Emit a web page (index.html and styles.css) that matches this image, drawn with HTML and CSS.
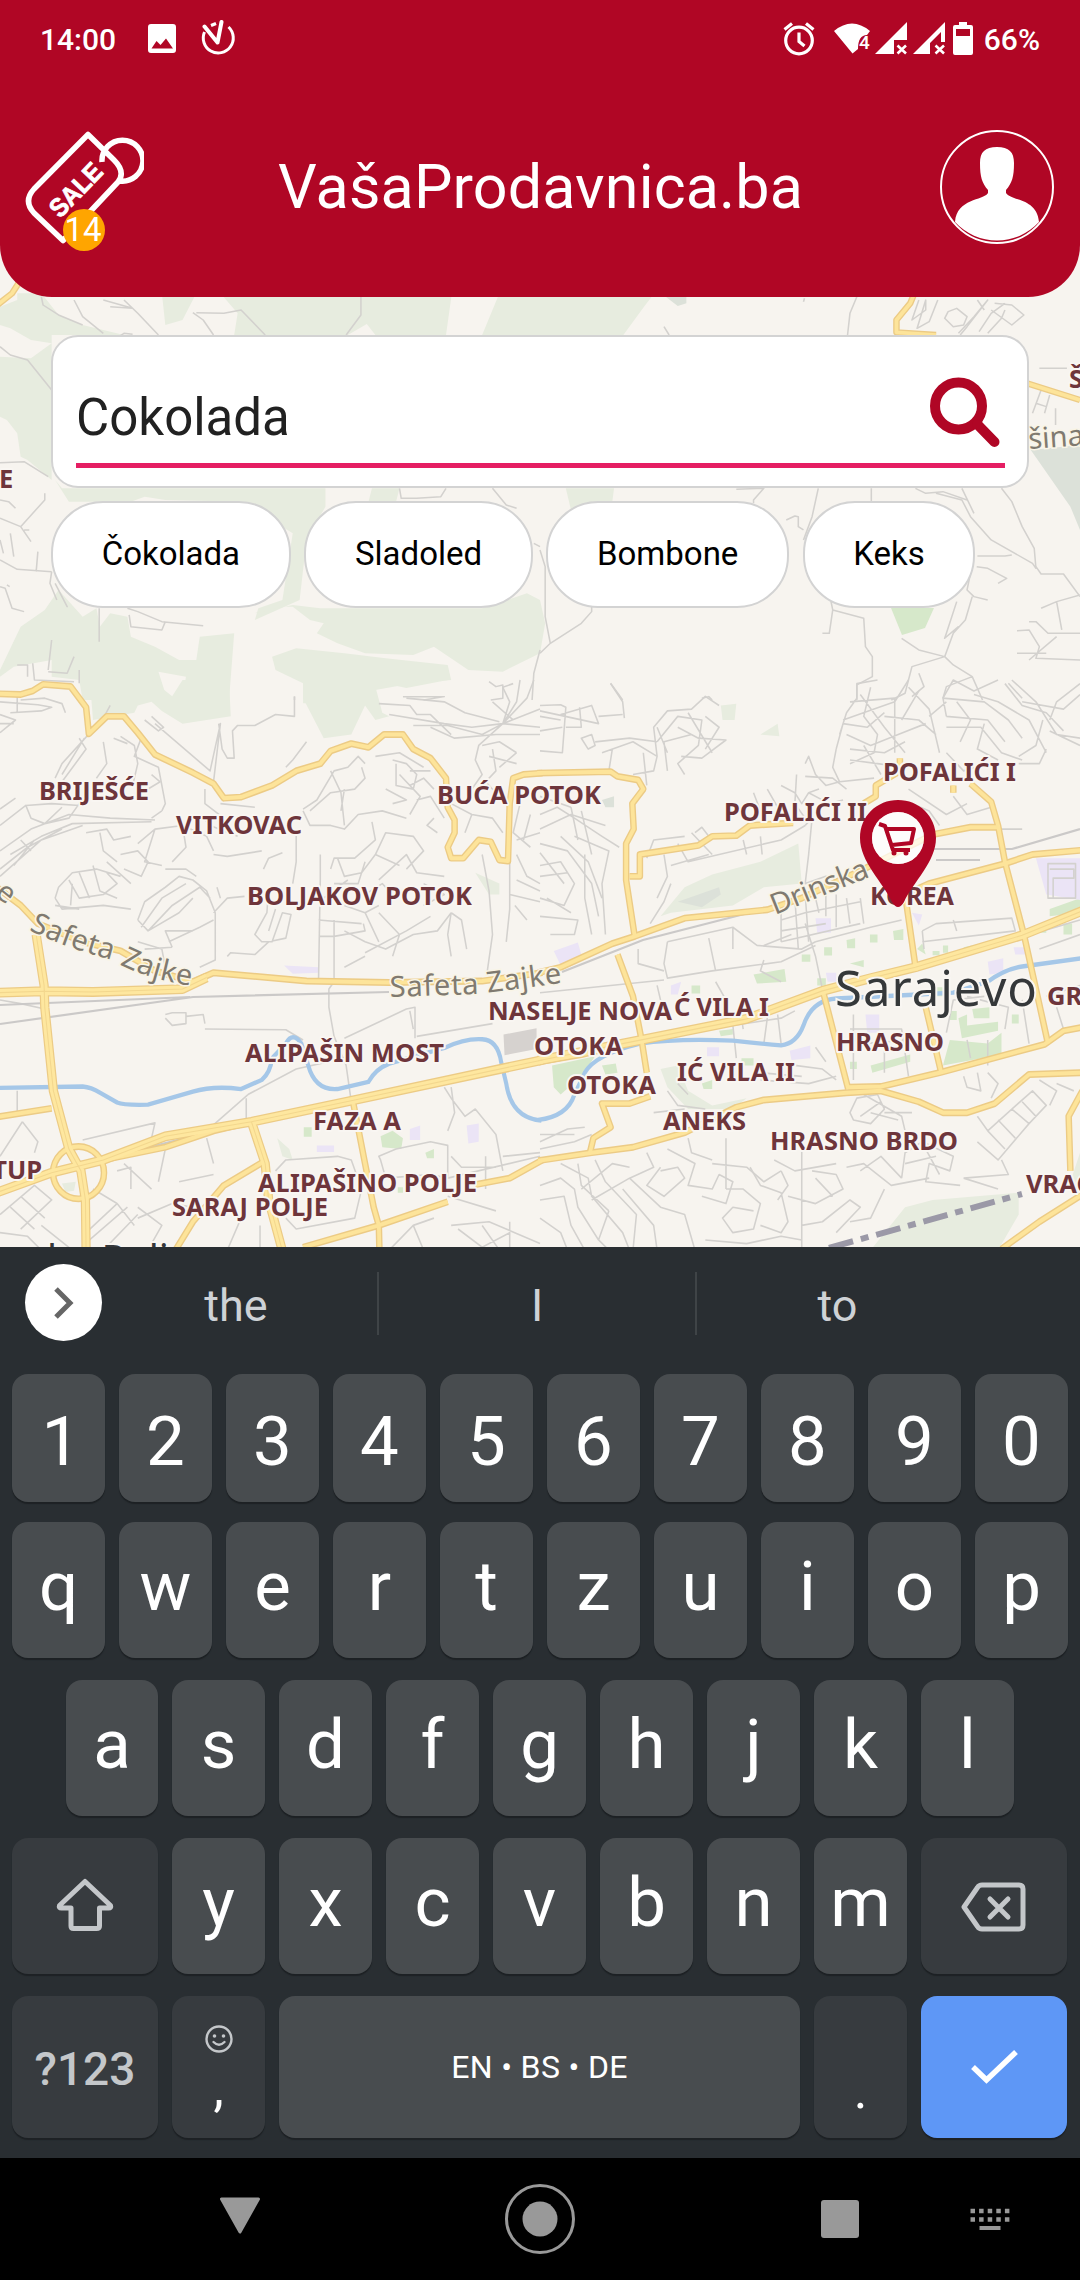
FILE: index.html
```html
<!DOCTYPE html>
<html lang="bs">
<head>
<meta charset="utf-8">
<title>VašaProdavnica.ba</title>
<link rel="stylesheet" href="styles.css">
</head>
<body>
<div class="screen">
  <header class="header">
    <div class="statusbar">
      <div class="status-group status-left">
        <span class="status-text">14:00</span>
        <svg class="ic-image" width="30" height="36" viewBox="0 0 30 36"><path fill="#fff" fill-rule="evenodd" d="M4 4H26Q29 4 29 7V30Q29 33 26 33H4Q1 33 1 30V7Q1 4 4 4ZM4.500 28.500H26L19 18.500L13.500 25L9.500 21Z"/></svg>
        <svg class="ic-timer" width="36" height="36" viewBox="0 0 36 36" fill="none" stroke="#fff"><path stroke-width="3" d="M4.500 12A15 15 0 1 0 28.500 7"/><path stroke-width="4" stroke-linecap="round" stroke-linejoin="round" d="M4.500 6.500L17.500 22.500L21.500 2"/><path stroke-width="3.400" d="M11 5.500L16 3.500"/></svg>
      </div>
      <div class="status-group status-right">
        <svg class="ic-alarm" width="32" height="36" viewBox="0 0 32 36" fill="none" stroke="#fff" stroke-width="3.200"><circle cx="16" cy="20.500" r="13.300"/><path d="M16 12.500V21.500L21.500 26M1.500 9.500L9 3.500M30.500 9.500L23 3.500"/></svg>
        <svg class="ic-wifi" width="37" height="36" viewBox="0 0 37 36"><path fill="#fff" d="M0 11Q18 -4 36 11L33 15Q24 15 24 29L18.500 33.500Z"/><text x="25" y="29" class="wifi-num">4</text></svg>
        <svg class="ic-sig" width="32" height="36" viewBox="0 0 32 36"><path fill="#fff" d="M0 34L32 2V20H19V34Z"/><path stroke="#fff" stroke-width="2.600" d="M22.500 25.500L31 33.500M31 25.500L22.500 33.500"/></svg>
        <svg class="ic-sig2" width="32" height="36" viewBox="0 0 32 36"><path fill="#fff" fill-rule="evenodd" d="M0 34L32 2V22H28V12L17 23V34Z"/><path stroke="#fff" stroke-width="2.600" d="M22.500 25.500L31 33.500M31 25.500L22.500 33.500"/></svg>
        <svg class="ic-batt" width="20" height="36" viewBox="0 0 20 36"><path fill="#fff" fill-rule="evenodd" d="M6 2H14V5H18Q20 5 20 7V33Q20 35 18 35H2Q0 35 0 33V7Q0 5 2 5H6ZM3 9V16H17V9Z"/></svg>
        <span class="status-text">66%</span>
      </div>
    </div>
    <div class="appbar">
      <div class="sale">
        <svg width="120" height="120" viewBox="23 130 120 120">
          <g fill="none" stroke="#fff" stroke-width="5.500" stroke-linejoin="round"><path d="M101 162A20.500 20.500 0 1 1 119 181M87 134.500L113 160Q125 172 117 182L62 240.500L33 213Q22 201 33 189Z"/></g>
          <text class="sale-text" transform="translate(59 219) rotate(-46)" textLength="64" lengthAdjust="spacingAndGlyphs">SALE</text>
        </svg>
        <span class="badge">14</span>
      </div>
      <h1 class="title">VašaProdavnica.ba</h1>
      <svg class="avatar" width="116" height="116" viewBox="0 0 116 116"><circle cx="58" cy="58" r="56" fill="none" stroke="#fff" stroke-width="2"/><path fill="#fff" d="M58 18C70 18 75 23 75 34C75 48 73 54 67 61V64C72 72 98 69 100 93A57 57 0 0 1 16 93C18 69 44 72 49 64V61C43 54 41 48 41 34C41 23 46 18 58 18Z"/></svg>
    </div>
  </header>

  <main class="content">
    <svg class="map" width="1080" height="1010" viewBox="0 237 1080 1010">
      <defs>
        <!-- secondary roads, north-west to south-east -->
        <g id="roads">
          <g transform="translate(0 300) scale(.3444 .3333)"><path d="M-8 15L35 -20L60 -60"/></g>
          <g transform="translate(540 300) scale(.3444 .3333)"><path d="M1095 -40L1075 10L1035 60L1035 97L1150 105M1400 245L1568 300"/></g>
          <g transform="translate(0 680) scale(.3444 .3636)">
            <path d="M-5 38L60 40L95 30L125 12L205 18L250 75L258 148L310 100L360 100L400 145L450 205L560 255L620 285L650 325L700 322L790 290L860 250L930 230L960 195L1020 175L1070 185L1115 150L1170 150L1200 190L1250 215L1295 270L1300 350L1320 385L1320 420L1300 460L1310 490L1345 490L1390 440L1425 445L1450 495L1475 498L1480 340L1490 270L1520 260L1575 256"/>
            <path d="M-10 570L60 620L110 670L240 720L350 745L450 800L560 830L620 805L890 828L1130 832L1400 828L1575 805"/>
            <path d="M-10 1202L150 1178M300 1320L480 1285L620 1240L730 1215M765 1325L650 1390L560 1490L505 1575M1025 1160L1060 1330L1085 1450L1100 1500L1102 1580M880 1560L1100 1500L1300 1435M1380 1388L1480 1370L1575 1320"/>
            <ellipse cx="228" cy="1355" rx="74" ry="72"/>
          </g>
          <g transform="translate(540 680) scale(.3444 .3636)">
            <path d="M-8 256L205 252L225 265L285 275L300 300L268 340L272 410L250 450L250 550L275 705"/>
            <path d="M-5 805L60 790L210 725L275 705L420 655L660 632L760 600L940 520L1140 425L1250 405L1330 405"/>
            <path d="M1060 590L1130 560L1350 505L1430 480L1575 468M260 540L290 540L290 480L460 455L500 430L570 428L610 400L735 393"/>
            <path d="M940 340L975 320L975 290L1045 250L1045 215M1250 285L1310 335L1330 400L1350 500L1405 700L1440 850L1475 1000M1200 290V310"/>
            <path d="M-5 1050L120 1030L240 1003M145 1300L155 1260L205 1230L180 1165L260 1165L320 1145M225 755L270 870L295 990L310 1080M820 850L850 960L895 1125M1120 900L1165 1080M1060 590L1092 800"/>
            <path d="M-5 1322L150 1300L270 1285L420 1245L570 1175L650 1155L890 1135L990 1130L1100 1160L1170 1190L1240 1190L1320 1165L1420 1085L1575 1080M895 1120L990 1118L1160 1080L1465 1002L1520 965L1575 955M1340 1565L1450 1490L1575 1415M1575 1130L1535 1200L1540 1350"/>
          </g>
        </g>
        <!-- primary roads -->
        <g id="primary">
          <g transform="translate(0 680) scale(.3444 .3636)">
            <path d="M-5 860L125 856L270 858L530 850L600 818M105 700L128 840L130 900L155 1130L200 1290L235 1350L248 1430L250 1575M-5 1408L150 1355L300 1320L480 1255L730 1215L1030 1155L1575 1045M730 1215L770 1330L780 1430L820 1570"/>
          </g>
          <g transform="translate(540 680) scale(.3444 .3636)">
            <path d="M-5 1047L240 1000L600 932L820 855L960 820L1090 790L1400 702L1575 635"/>
          </g>
        </g>
      </defs>
      <rect x="0" y="237" width="1080" height="1010" fill="#f7f4ef"/>

      <!-- woods and parks -->
      <g class="wood">
        <g transform="translate(0 300) scale(.3444 .3333)">
          <path d="M0 20L50 0V-20H120L170 45L240 75L360 105L150 105L150 130L90 120L30 85L0 75Z"/>
          <path d="M0 170L90 175L150 130V540L80 480L60 470L50 400L20 360L0 350Z"/>
          <path d="M470 -20H570L530 60L480 75ZM640 -20H1312L1295 105H1090L1065 72L1010 105H680L690 40ZM1450 -20H1900L1870 20L1810 105H1400Z"/>
          <path d="M160 540L180 565H945V620L890 720L870 900L740 960L750 925L820 900L850 700L700 605L480 600L420 590L380 605H200ZM1080 565H1160L1150 605H1070Z"/>
          <path d="M740 940L780 920H850L900 960L940 970L920 1000L980 1030L1060 1060L1200 1065L1260 1040L1360 1110L1460 1115L1568 1060L1583 970L1568 900L1530 880L1400 925H930L850 915Z"/>
          <path d="M790 1070L860 1045L1000 1060L1120 1075L1300 1095L1310 1140L1200 1150L1090 1170L1080 1210H880V1150L800 1110Z"/>
          <path d="M170 870L240 950L280 925L290 980L320 940L370 950L380 1010L450 1040L520 1080H570L580 1010L680 1000L665 1200H560L530 1190L540 1130L460 1115L480 1180L440 1200H240L230 1140L150 1130V1080L40 1100L0 1130V1110L60 980L130 930Z"/>
        </g>
        <g transform="translate(540 300) scale(.3444 .3333)"><path d="M75 565H215L210 605L150 610L90 630Z"/></g>
        <g transform="translate(0 680) scale(.3444 .3636)">
          <path d="M265 50V0H440L500 45L530 0H665L670 100L530 120L470 85L440 60L400 70L390 90L270 110ZM880 50V0H1085L1110 90L1130 100L1090 110L1060 70L1020 150L940 160ZM1095 5L1300 0L1180 22Z"/>
          <path d="M1380 530L1450 560V590H1420ZM180 1385L220 1380L215 1405L190 1408ZM805 1260L840 1290L850 1320L820 1310Z"/>
        </g>
        <g transform="translate(540 680) scale(.3444 .3636)">
          <path d="M350 650L420 570L500 535L640 500L750 450L760 560L650 570L560 620L380 640ZM525 70L570 65L565 110H530ZM640 150L690 120L695 155ZM960 1568L1060 1450L1140 1430L1390 1410V1470L1330 1568ZM1568 1300L1540 1380H1568ZM350 1070L400 1060L430 1130L500 1170L600 1150L560 1180H430L370 1120Z"/>
        </g>
      </g>
      <g class="shade">
        <g transform="translate(540 300) scale(.3444 .3333)"><path d="M1425 450L1568 435V690L1540 620ZM365 -10H425V10L400 18Z"/></g>
        <g transform="translate(540 680) scale(.3444 .3636)"><path d="M400 610L520 570L525 590L470 625ZM180 330L215 320V350H190Z"/></g>
      </g>
      <g class="park">
        <path d="M891 608H934L925 628L902 635Z"/>
        <g transform="translate(0 680) scale(.3444 .3636)"><path d="M882 1230H905V1256H882ZM1105 1255L1140 1240L1170 1260L1165 1290L1110 1285ZM1235 1300L1260 1290V1315H1240ZM1155 1395H1170V1410H1155Z"/></g>
        <g transform="translate(540 680) scale(.3444 .3636)"><path d="M35 1060L160 1035L120 1090L60 1140L40 1120ZM180 1060L220 1055L225 1080L190 1085ZM1170 1060L1190 990L1300 1000L1340 970V1030ZM1215 930L1240 920V950L1330 940V965L1225 985ZM1255 905L1305 900V930H1260ZM1480 630L1568 600V640L1480 650ZM825 735H848V758H825ZM890 715L915 710V738H892ZM958 700H980V722H958ZM1025 690L1055 685V715H1028ZM760 755H785V775H760ZM1095 740L1110 725L1120 755ZM1140 745H1160V757H1140ZM1170 730H1185V750H1170ZM1230 735L1280 725V745H1235ZM440 840H465V862H440ZM620 810L710 795L715 830L630 835ZM900 780L940 770V790ZM805 820H830V840H805ZM905 970H925V995H905ZM900 1050H920V1070H900ZM960 1060L1075 1030V1050L965 1080ZM1190 910H1210V935H1190ZM1370 920H1390V945H1370ZM1450 670H1470V695H1450ZM1520 670H1545V700H1520ZM470 1110L500 1100V1125H475ZM520 965L560 960V975L525 980ZM1150 845H1180V870H1150ZM585 1040H620V1060H585Z"/></g>
      </g>
      <g class="civic">
        <g transform="translate(0 680) scale(.3444 .3636)"><path d="M825 785L925 790V805L850 808ZM1190 1235L1220 1225V1265H1190ZM1355 1225L1390 1220V1270L1360 1275ZM920 1280H970V1298H920Z"/></g>
        <g transform="translate(540 680) scale(.3444 .3636)"><path d="M40 745L110 722L120 755L60 785ZM800 655H845V695H805ZM1440 490H1568V605L1470 590ZM1080 640L1110 645L1100 675ZM1300 775L1345 765V805L1305 810ZM725 1020L785 1005V1040L730 1045ZM945 920H985V970H950ZM380 840L410 830L400 865H380ZM485 1010H520V1035H485ZM1375 735H1410V755H1380ZM830 805H860V830H835Z"/></g>
      </g>
      <g class="building"><g transform="translate(0 680) scale(.3444 .3636)"><path d="M1462 975L1558 958V1015L1465 1032Z"/></g></g>

      <!-- local streets -->
      <g class="street">
        <g transform="translate(0 300) scale(.3444 .3333)">
          <path d="M120 -10L125 15L170 45L240 75M215 0L240 50L300 100M360 0L400 40L460 105M300 0L385 25L320 20M345 110L360 100L385 103M560 38L590 60L620 105M570 38L650 40L700 30L770 105M1048 -10V45L1005 105M0 140L30 165L80 180L150 270M0 488L70 485L140 530M0 600L25 605L45 625M130 580V600L60 680L0 655M0 780L50 808L150 815M60 680L90 725M70 690L85 690M30 700L40 770M0 720L10 760M110 755L105 815M0 860L15 865L35 925L70 935M20 855L28 860M150 815L145 850L165 900M160 850L195 920L175 880M288 925V1025M370 925L400 935L470 965L590 977M375 945L380 980L470 990L480 965M150 1020L140 1110M50 1095H80V1130M95 1090L100 1140L215 1145M215 1070L195 1120L140 1115M230 1110V1150M1160 565L1165 595H1210L1280 590L1295 565M1430 565L1470 615L1500 625M1550 730L1568 740M1568 1050L1550 1120L1545 1200M1420 1145L1440 1160L1460 1155V1195L1425 1200M1170 1190L1290 1190L1230 1200M855 1190V1200"/>
        </g>
        <g transform="translate(540 300) scale(.3444 .3333)">
          <path d="M768 -5L765 5M920 -10L900 40L893 105M360 80L375 105M1100 0L1080 60L1120 30V0L1095 85L1130 65L1155 0M1185 35L1210 25L1240 50L1230 75L1200 80L1175 55ZM1215 100L1260 50L1300 0L1240 80L1220 105M1275 95L1310 40L1350 10M1310 30L1370 75L1405 45L1370 15L1320 10M1270 0L1290 30M1300 100L1340 55L1350 30M1450 205H1530M1455 270L1430 340M1480 285L1465 340M1497 325V375M1440 310L1470 320M570 568L650 565L620 600V610M808 565L790 650L765 720M715 660L740 648L750 650V680L765 690M962 565V605M1090 565L1120 580L1170 575L1240 600M1150 580L1225 600L1250 650L1310 720L1430 790L1440 805L1435 745L1400 680L1370 605L1340 565M1225 565L1260 640M1270 768H1350L1370 765M1268 800L1300 805L1355 835L1330 850M1250 820L1240 870L1260 890L1300 900M1210 905L1180 1000L1175 1015L1215 980M1255 890L1235 960L1200 1000L1175 1070M845 905L850 930L840 1000L820 1000M850 930L940 955L945 1040L965 1070V1130L920 1155V1200M1050 1015L1100 1050L1175 1070L1200 1095L1255 1130L1285 1200M1175 1070L1080 1100L1060 1180L1020 1200M1100 1120L1115 1160L1080 1190M1255 1130L1180 1160L1170 1195M1385 992L1420 990L1450 1040L1440 1075L1568 1080M1420 965H1440L1475 1000H1568M1455 925L1500 905L1568 885M1500 905L1515 990M1385 1060H1470M1420 1080L1500 1010M1440 800L1455 822H1520L1568 890M1360 1150L1400 1195M0 750L15 800V950L30 1030L0 1060M30 1030L120 970L150 935V920M205 1150L240 1200M470 1195L490 1190L500 1200"/>
        </g>
        <g transform="translate(0 680) scale(.3444 .3636)">
          <path d="M50 40V90M0 60L110 68L150 75L120 85L30 90M0 95L45 110L0 145M60 55L130 50L180 65L190 90M0 120H40M320 70L300 105L180 230L160 270M245 160L180 260M350 155L390 180L400 230L385 290M230 160L250 190L180 280M410 160L390 210L460 240L480 340L470 360M440 100L475 130L460 140L420 110M450 120L610 250L640 120L620 280M635 120L645 190L660 215H680L675 140L690 125L740 125L800 95L855 100V45M890 170L850 220L830 240M300 170L310 230L280 270M330 160L370 175"/>
          <path d="M0 355L45 325M0 400L75 345L90 380L130 395L180 350M75 345L150 340L230 345M0 470L90 410L200 370L320 380L450 385M30 480L120 430L210 395L440 390M0 520L80 460L180 410M40 510L100 440M90 470L60 440M0 540L120 440L240 400M130 395L200 380L230 340M250 420L310 410L330 440L380 430M290 420L300 470L340 500M440 260L465 280L430 300M470 360L440 380"/>
          <path d="M160 600L170 570L210 530L280 520L350 540M160 600L180 630L300 620L380 630M200 550L230 600L300 590L340 560L310 530M230 530L260 600M270 510L290 580L340 600M350 480L400 470L430 500L410 540L360 520M310 500L380 560M400 660L420 610L480 570L520 540L560 550L600 580L625 640V770L580 790M400 660L430 690L520 640L560 600M410 680L470 600L540 560M430 690L500 620L580 570L610 600M480 520L540 520L570 540M490 720L580 680L620 660M400 720L470 740L480 790M420 740L500 735M500 735L480 690L560 690M400 450L450 410L530 400L600 430L620 470M450 410L420 500L470 510M530 400L540 460L500 500M580 370L610 400L690 430M620 480L660 485L760 470M595 300V340L650 380M640 340L740 350M620 640L660 600L710 595M630 570L640 600M660 760L670 750L740 755L780 720L830 710L845 645L820 640L790 720L760 720L740 700L775 640L780 570M765 520L780 490L820 475M860 420V500L850 560M800 630L780 690M160 620L230 630M210 560L205 620"/>
          <path d="M880 355L920 330L970 250L1010 240L1040 210L1060 230M900 360L960 310L1030 300L1060 270L1050 240M880 360L900 400H960L1000 410L1040 370L1110 360L1180 380M960 250L990 310L1000 400M1000 300L990 360M1140 220L1180 230L1210 260L1200 300L1150 290L1150 230M1090 210L1160 200L1230 240M1160 260L1220 320L1190 370M1190 290L1230 270L1260 300M1210 330L1250 320L1290 380M1260 380L1240 400L1270 420M1120 300L1180 330L1140 340"/>
          <path d="M930 480V550L925 820M960 520L970 490L1030 490L1090 440L1080 390M970 560L1040 560L1060 500M940 600L980 570L1010 550M980 490L1000 540L1050 530L1090 480L1160 510M1090 480L1120 420L1200 430L1230 470L1180 520M1100 550L1180 480L1210 530L1290 540M1060 590L1110 560L1150 600M1000 620L1060 640L1100 620M1230 560L1290 590L1230 620M925 660L1050 670M925 705H970L1060 690L1055 670M970 660V830L955 850V900L970 980L1005 1060L1020 1160M1000 690L1060 720L1120 740L1200 700L1270 690L1310 640M1060 640L1100 720M1100 640L1160 700L1140 760M1310 640L1340 660L1355 740M1310 640L1300 700L1310 760M1060 750L1180 690L1250 650M1000 790L1060 760M1400 480L1420 580L1430 700L1415 800M1480 500V630L1470 720M1495 620L1530 660M1500 440L1568 420M1500 480L1530 540L1568 560M1510 340L1490 420L1540 460M1540 370L1520 440M1480 590L1568 610M1500 550L1568 580"/>
          <path d="M1100 65L1190 70L1210 95H1250L1310 150M1130 95L1290 120L1370 130L1460 120L1568 80M1180 50L1290 60L1350 90L1450 115M1200 125L1300 125L1400 150L1460 120L1500 60L1510 0M1460 120L1480 60L1460 20L1490 10M1460 120L1530 50L1550 0M1460 120L1568 130M1460 120L1390 180L1380 220L1400 260L1370 300M1250 130L1320 160L1440 150L1568 150M1400 180L1450 170L1500 200M1430 60L1490 110M1420 210L1500 230M1430 190L1440 250L1410 280L1440 310M1250 250L1190 250M1370 370L1310 340M1350 420L1370 370L1430 380L1460 420M1500 200L1450 240"/>
          <path d="M480 920L500 915H540V945L500 950L480 930M540 925L590 920L595 945M595 960L830 962L880 990M720 1140L860 1070L1000 1040M0 880L60 890L130 905M1000 985L1180 905L1205 900V985M1190 910L1200 960M1210 980L1430 945M50 1130V1200M240 1265L450 1218L440 1260M715 1150V1210M600 1240L720 1140M65 1215L110 1270L100 1300M0 1310L65 1215M340 1350L380 1340V1400M450 1280L480 1290L460 1380M360 1330L440 1400M520 1380L620 1360M800 1350L830 1320L980 1310L1020 1320L1050 1400L1030 1480L860 1510L830 1480M1100 1310L1150 1290L1250 1270L1300 1280V1370L1250 1360L1120 1370L1105 1320ZM1290 1120L1310 1150L1350 1200L1380 1180L1440 1250L1460 1350M1310 1310L1340 1340L1440 1340M1300 1370L1568 1310M1310 1120L1320 1190L1300 1240M1410 1310V1400M1460 1310L1568 1300M600 1260L620 1330M0 1470L100 1390L150 1430L60 1510M30 1450L100 1510M60 1420L130 1480M250 1520L340 1440L390 1500M260 1540L370 1450M300 1568L400 1470M340 1440L270 1400M400 1450L470 1500L440 1550M400 1480L500 1440L560 1450M0 1520L80 1530L120 1568M120 1500L210 1568M1130 1568L1200 1500L1260 1480M1200 1500L1230 1568M1310 1500L1420 1490L1568 1550M1330 1510L1400 1560L1480 1520M1480 1490V1568M1400 1500L1450 1568M1300 1420L1440 1460M755 1500V1568M660 1568L700 1480"/>
        </g>
        <g transform="translate(540 680) scale(.3444 .3636)">
          <path d="M0 70L60 68L75 75L65 200L0 195M0 100L60 110M0 140L65 130M0 85L170 120L150 70L60 95M75 130L120 130L115 75M170 100L240 95M205 10L240 60L245 105M120 160L150 150L160 180L140 190ZM180 200L270 170L340 210L330 250L270 260M160 170L260 160L340 170M340 210L330 130L370 85L440 80L480 45L520 70M340 170L400 100L470 110L460 180L400 230L420 260M370 250L360 170L440 150M400 130L460 160L540 165L470 215L410 210M430 90L500 200M340 130L370 200M480 190L520 130L480 100M300 200L310 290M210 190L200 250"/>
          <path d="M0 410L90 370L190 400M0 370L50 350L100 380L180 430L230 460M100 430L200 470L180 560L190 700M0 450L80 470L150 560L170 650M60 430L140 500L180 600M0 510L60 500L100 560L70 620L0 600M0 540L80 530M20 600L90 640M0 650L110 660L100 700L30 700M90 350L110 440M120 360L150 480M0 475L70 560M130 480V600L150 700M0 320L90 350"/>
          <path d="M310 490L330 440L420 430M360 480L370 540L340 600M400 450L430 500L700 440L770 400M380 510L490 480M590 440L600 480M640 430L645 480M450 420L470 405L490 430M440 420L500 480M770 400L790 380L780 480L770 560L830 540L870 550M770 230L780 210L800 260L830 290L870 280M700 290L740 310L760 340L780 310L810 300M745 260L740 340L770 380M770 265L850 270L890 300M620 310L640 360M660 300L690 350M780 310L840 340L880 330M320 670L360 610L380 560"/>
          <path d="M870 150L890 90L920 50V10L980 0M860 190L850 240L870 280L970 270M860 190L880 120L950 130L1000 90M880 110L970 80L1030 60L1070 0M890 150L960 180L1040 150L1120 120M900 60L1030 50M930 40L1000 130L1060 200M960 20L940 100L980 150L970 200L900 230M1030 50V200M1070 20L1130 80L1160 200M1000 100L1100 110L1150 150M900 190L1000 200L1060 170M900 220L980 230L1060 240M1100 30L1050 110M940 180L990 260"/>
          <path d="M1170 50L1200 0L1260 30L1330 0M1180 100L1170 50L1290 60L1360 110L1400 160M1180 100L1300 110L1350 170M1180 130L1280 130L1340 200L1400 220M1210 60L1250 110L1220 170M1260 40L1330 60L1420 110L1470 200M1350 10L1400 70L1470 90L1520 140M1370 0L1440 60L1500 150L1568 160M1400 60L1520 80L1568 40M1480 140L1568 180M1460 110L1440 180L1390 210M1290 120L1270 190L1330 220M1390 230L1450 230L1470 190M1180 200L1230 250L1300 230M1070 300L1180 370L1240 340M1080 340L1130 360L1160 400M1200 320L1240 370L1310 350M1330 410H1400M1480 110L1500 60L1568 10M1130 100L1180 60"/>
          <path d="M370 720L360 780L370 820L500 800L700 775L800 730M370 720L560 680L630 730L760 740L800 720M490 710L510 800M560 680V740M285 740V780L360 800M0 860L360 825M700 660L770 640L930 610M740 600L750 740M770 590L780 720M800 600L810 640M830 590V650M860 590V680M700 640V720M700 690L830 670M700 720L930 670M890 600L900 670M930 600L940 670M650 730L730 700M800 720L960 680L1050 660M770 670L800 760L820 850M650 770L640 800L700 830M510 830L540 880L530 910M340 840L350 880M1110 690L1150 670L1370 655L1380 690L1110 720M1110 690L1115 740M1200 660L1210 690M1460 690L1568 660M1450 740L1568 700M1475 505H1555V600H1475ZM1480 520H1550V545H1490V600"/>
          <path d="M560 950L700 930L740 910M560 950L570 1040M580 900L590 960M660 930L650 1000M690 920L700 1000M740 1060L820 1070L860 1100M370 1130L400 1170L480 1180M400 1110L430 1140M640 1050V1080L760 1090M640 1100L780 1110L860 1090M800 1010L830 1050M910 920V1100M940 1000L1070 990M900 960H1050L1070 1090M1000 1000V1080M1180 970L1200 880L1290 870M1240 870L1360 900L1350 960M1400 880L1420 1000M1240 990L1250 1040M1300 990V1060M1500 900L1520 960M1470 870L1568 840"/>
          <path d="M0 1270L80 1235L130 1230M0 1290L100 1270L150 1250M0 1250L100 1250M420 1180L330 1190M430 1260L440 1300L500 1320M540 1260V1400M500 1330L600 1340L650 1380L700 1350M680 1320L740 1350L860 1330M900 1190L920 1150L980 1140L1000 1180L960 1220L910 1210ZM930 1200L990 1160M940 1140L1050 1200L1060 1240M960 1190L1040 1210M1000 1190L1080 1190M1270 1200L1300 1240L1370 1180L1420 1220L1330 1320L1270 1270M1300 1240L1350 1290M1330 1210L1380 1260M1370 1180L1430 1130L1470 1170L1420 1220M1400 1160L1440 1200M1230 1090L1240 1120L1280 1130L1270 1080M1300 1080L1330 1110L1310 1150M1450 1100L1500 1130L1480 1170M1500 1110L1550 1130"/>
          <path d="M0 1390L60 1370L100 1400L110 1450L170 1540L200 1568M0 1430L70 1420L90 1500L130 1568M0 1480L60 1520L80 1568M60 1330L140 1370L150 1420L240 1520L260 1568M110 1330L120 1390L200 1460M120 1400L210 1330L260 1340M150 1430L260 1370L330 1340L310 1300M160 1320L190 1380L280 1470L270 1568M200 1460L170 1540M240 1400L330 1500L340 1568M260 1370L350 1450L420 1470L450 1568M350 1340L310 1390L360 1420L420 1370L400 1340L350 1350M370 1290L450 1330L430 1390L500 1400L520 1360L560 1380L540 1440L470 1420M540 1400L590 1400L640 1440L620 1510L560 1520L530 1480L560 1450L620 1460M610 1340L640 1390L700 1410L720 1490L700 1520L640 1500M700 1350L720 1390L690 1430M760 1290V1568M720 1420L800 1440L880 1400L860 1360L790 1350M760 1500L820 1490L900 1430L930 1450L860 1520M800 1370L850 1420M890 1340L940 1330L1020 1390L1130 1370M930 1350L990 1310L1050 1370M1050 1370L1060 1300L1110 1270L1200 1310L1190 1350L1130 1330L1120 1380L1220 1390M1120 1290L1160 1360M1060 1330L1150 1310M1000 1400L960 1480L900 1490M1340 1320L1360 1360L1230 1370M1230 1370L1330 1400M480 1540L600 1550L700 1530L760 1540"/>
        </g>
      </g>
      <g class="rail">
        <path d="M0 1024L193 997L389 992M0 1005L190 997M562 972L643 940L760 910M932 849H1012L1080 829M936 860H980M150 1147L205 1133"/>
      </g>
      <g class="river">
        <g transform="translate(0 680) scale(.3444 .3636)"><path d="M-5 1122L240 1118Q265 1120 290 1135L340 1162Q360 1170 430 1168L560 1132Q620 1115 700 1125L760 1100Q785 1080 790 1040L830 1000Q850 965 875 1000L895 1060Q915 1130 980 1125L1070 1105Q1090 1070 1130 1055L1290 1012Q1350 985 1400 988Q1445 990 1455 1050L1470 1110Q1485 1205 1572 1212"/></g>
        <g transform="translate(540 680) scale(.3444 .3636)"><path d="M-5 1210Q80 1200 100 1140L130 1080Q160 1030 290 1000Q400 985 560 992Q640 1000 700 1005Q745 1000 765 950Q790 880 860 876L1100 865L1200 860L1300 830Q1350 795 1400 788L1575 765"/></g>
      </g>
      <g class="road">
        <use href="#roads" class="casing"/>
        <use href="#primary" class="casing-wide"/>
        <use href="#roads" class="fill"/>
        <use href="#primary" class="fill-wide"/>
        <use href="#primary" class="median"/>
      </g>
      <path class="border" d="M829 1248L1022 1194"/>

      <!-- street names -->
      <defs>
        <path id="name-a" d="M29 930Q60 946 112 960Q145 980 200 987"/>
        <path id="name-b" d="M390 997L478 994L570 982"/>
        <path id="name-c" d="M775 915L882 872"/>
      </defs>
      <g class="street-name">
        <text><textPath href="#name-a" textLength="172">Safeta Zajke</textPath></text>
        <text><textPath href="#name-b" textLength="173">Safeta Zajke</textPath></text>
        <text><textPath href="#name-c" textLength="103">Drinska</textPath></text>
        <text transform="translate(-6 895) rotate(38)">e</text>
        <text transform="translate(1029 449) rotate(-4)">šina</text>
      </g>
      <!-- district names -->
      <g class="district">
        <text x="-1" y="488">E</text>
        <text x="1069" y="388">Š</text>
        <text x="39" y="800" textLength="110">BRIJEŠĆE</text>
        <text x="176" y="834" textLength="126">VITKOVAC</text>
        <text x="247" y="905" textLength="225">BOLJAKOV POTOK</text>
        <text x="437" y="804" textLength="164">BUĆA POTOK</text>
        <text x="883" y="781" textLength="133">POFALIĆI I</text>
        <text x="724" y="821" textLength="143">POFALIĆI II</text>
        <text x="870" y="905" textLength="84">KOREA</text>
        <text x="488" y="1020" textLength="184">NASELJE NOVA</text>
        <text x="674" y="1016" textLength="95">Ć VILA I</text>
        <text x="534" y="1055" textLength="89">OTOKA</text>
        <text x="567" y="1094" textLength="89">OTOKA</text>
        <text x="677" y="1081" textLength="118">IĆ VILA II</text>
        <text x="663" y="1130" textLength="83">ANEKS</text>
        <text x="836" y="1051" textLength="108">HRASNO</text>
        <text x="770" y="1150" textLength="188">HRASNO BRDO</text>
        <text x="1047" y="1005">GR</text>
        <text x="1026" y="1193">VRAC</text>
        <text x="245" y="1062" textLength="199">ALIPAŠIN MOST</text>
        <text x="313" y="1130" textLength="88">FAZA A</text>
        <text x="258" y="1192" textLength="219">ALIPAŠINO POLJE</text>
        <text x="172" y="1216" textLength="156">SARAJ POLJE</text>
        <text x="42" y="1179" text-anchor="end">TUP</text>
      </g>
      <g class="city">
        <text x="835" y="1006" textLength="202" class="city-main">Sarajevo</text>
        <text x="47" y="1272" class="city-sub">ko Polje</text>
      </g>
      <!-- store pin -->
      <g>
        <path fill="#b00625" fill-rule="evenodd" d="M898 800C919 800 936 816 936 838C936 862 913 882 904 902Q898 912 892 902C883 882 860 862 860 838C860 816 877 800 898 800ZM898 812A26 26 0 1 0 898 864A26 26 0 1 0 898 812Z"/>
        <circle cx="898" cy="838" r="26" fill="#fff" fill-opacity=".72"/>
        <g fill="none" stroke="#b00625" stroke-width="4" stroke-linejoin="round"><path d="M879 824L885 826L893 850H910M886 829H914L911 843L892 845"/></g>
        <circle cx="894" cy="853" r="2.500" fill="#b00625"/><circle cx="906" cy="853" r="2.500" fill="#b00625"/>
      </g>
    </svg>

    <section class="search-area">
      <div class="search">
        <div class="search-field">
          <span class="query">Cokolada</span>
          <svg class="search-icon" width="74" height="74" viewBox="0 0 74 74" fill="none" stroke="#b00625"><circle cx="31.500" cy="31" r="23.500" stroke-width="10"/><path stroke-width="10" stroke-linecap="round" d="M50 49L67.500 67"/></svg>
        </div>
      </div>
      <div class="chips">
        <button class="chip">Čokolada</button>
        <button class="chip">Sladoled</button>
        <button class="chip">Bombone</button>
        <button class="chip">Keks</button>
      </div>
    </section>
  </main>

  <section class="keyboard">
    <div class="suggest">
      <span class="expand"><svg width="40" height="40" viewBox="0 0 40 40"><path fill="none" stroke="#666" stroke-width="5" d="M12 6L26 20L12 34"/></svg></span>
      <span class="word word-first">the</span><i class="divider"></i>
      <span class="word word-mid">I</span><i class="divider"></i>
      <span class="word word-last">to</span>
    </div>
    <div class="row digits"><b class="one">1</b><b>2</b><b>3</b><b>4</b><b>5</b><b>6</b><b>7</b><b>8</b><b>9</b><b>0</b></div>
    <div class="row letters"><b>q</b><b>w</b><b>e</b><b>r</b><b>t</b><b>z</b><b>u</b><b>i</b><b>o</b><b>p</b></div>
    <div class="row letters home"><b class="first">a</b><b>s</b><b>d</b><b>f</b><b>g</b><b>h</b><b>j</b><b>k</b><b>l</b></div>
    <div class="row letters shifted">
      <b class="wide dark"><svg width="60" height="60" viewBox="0 0 60 60"><path fill="none" stroke="#c4c7ca" stroke-width="5" stroke-linejoin="round" d="M30 5.500L55.500 29.500Q56.500 32 53.500 32H44.500V50Q44.500 52.500 41.500 52.500H18.500Q16 52.500 16 50V32H6.500Q3.500 32 4.500 29.500Z"/></svg></b>
      <b>y</b><b>x</b><b>c</b><b>v</b><b>b</b><b>n</b><b>m</b>
      <b class="wide dark"><svg width="70" height="60" viewBox="0 0 70 60"><path fill="none" stroke="#c4c7ca" stroke-width="5" stroke-linejoin="round" d="M5 31L18.500 11.500Q20 9 23 9H60Q64 9 64 13V49Q64 53 60 53H23Q20 53 18.500 50.500Z"/><path stroke="#c4c7ca" stroke-width="5" stroke-linecap="round" d="M31 23L49 41M49 23L31 41"/></svg></b>
    </div>
    <div class="row bottom">
      <b class="wide dark sym">?123</b>
      <b class="dark comma"><svg width="28" height="28" viewBox="0 0 28 28"><g fill="none" stroke="#c4c7ca" stroke-width="2.400"><circle cx="14" cy="14" r="12.500"/><path stroke-linecap="round" d="M8.500 17Q14 22.500 19.500 17"/></g><circle cx="9.500" cy="11" r="1.800" fill="#c4c7ca"/><circle cx="18.500" cy="11" r="1.800" fill="#c4c7ca"/></svg><span>,</span></b>
      <b class="space">EN • BS • DE</b>
      <b class="dark period"><span>.</span></b>
      <b class="wide enter"><svg width="60" height="60" viewBox="0 0 60 60"><path fill="none" stroke="#fff" stroke-width="5.500" d="M9 30L22.500 43L52 15"/></svg></b>
    </div>
  </section>

  <nav class="navbar">
    <svg width="42" height="38" viewBox="0 0 42 38"><path fill="#999" stroke="#999" stroke-width="3" stroke-linejoin="round" d="M2.500 2H39.500L21 35Z"/></svg>
    <svg width="72" height="72" viewBox="0 0 72 72"><circle cx="36" cy="36" r="33.500" fill="none" stroke="#999" stroke-width="3"/><circle cx="36" cy="36" r="17.500" fill="#999"/></svg>
    <svg width="40" height="40" viewBox="0 0 40 40"><rect x="1" y="1" width="38" height="38" rx="3" fill="#999"/></svg>
    <svg width="40" height="24" viewBox="0 0 40 24" fill="none" stroke="#999" stroke-width="4.500"><path stroke-dasharray="4.500 4.100" d="M.500 4H39.500M.500 12.500H39.500"/><path stroke-width="4" d="M9.500 21H30.500"/></svg>
  </nav>
</div>
</body>
</html>
```
FILE: styles.css
```css
* { box-sizing: border-box; }
body { margin: 0; font-family: Roboto, "Liberation Sans", sans-serif; }
svg { display: block; flex: none; }
.screen { width: 1080px; height: 2280px; display: flex; flex-direction: column; overflow: hidden; background: #000; }

/* header */
.header { height: 297px; flex: none; background: #b00625; border-radius: 0 0 52px 52px; position: relative; z-index: 1; color: #fff; }
.statusbar { height: 76px; display: flex; justify-content: space-between; padding: 0 40px; }
.status-group { display: flex; align-items: center; }
.status-text { font-size: 30px; font-weight: 500; line-height: 36px; padding-top: 3px; }
.ic-image { margin-left: 31px; }
.ic-timer { margin-left: 23px; }
.ic-wifi { margin-left: 19px; }
.ic-sig { margin-left: 4px; }
.ic-sig2 { margin-left: 6px; }
.ic-batt { margin: 0 11px 0 8px; }
.wifi-num { font: 500 19px Roboto, sans-serif; fill: #fff; }
.appbar { display: flex; align-items: center; justify-content: space-between; height: 221px; padding: 0 25px 0 24px; }
.sale { position: relative; margin-top: 7px; }
.sale-text { font: 700 26px "Liberation Sans", sans-serif; fill: #fff; stroke: #fff; stroke-width: .8px; }
.badge { position: absolute; left: 39px; top: 79px; width: 42px; height: 42px; border-radius: 50%; background: #ffa500; font-size: 33px; line-height: 41px; text-align: center; text-indent: -2px; }
.title { margin: 0 0 0 -2px; font-size: 61px; font-weight: 400; line-height: 80px; letter-spacing: .15px; }

/* map */
.content { position: relative; height: 950px; flex: none; }
.map { position: absolute; left: 0; top: -60px; }
.wood { fill: #e7ecdf; }
.shade { fill: #dce1d9; }
.park { fill: #d6e8ca; }
.civic { fill: #ebe4f6; }
.building { fill: #d6d2cf; }
.street { fill: none; stroke: #d3d1ce; stroke-width: 4.500; stroke-linejoin: round; }
.rail { fill: none; stroke: #cbc9c8; stroke-width: 2.200; }
.river { fill: none; stroke: #a5c7e8; stroke-width: 12; }
.road { fill: none; stroke-linejoin: round; }
.casing { stroke: #eccb85; stroke-width: 19; }
.casing-wide { stroke: #eccb85; stroke-width: 27; }
.fill { stroke: #fde49a; stroke-width: 11; }
.fill-wide { stroke: #fee79f; stroke-width: 20; }
.median { stroke: #f3d78e; stroke-width: 3; }
.border { fill: none; stroke: #9b99a7; stroke-width: 6; stroke-dasharray: 25 8 8 8; }
.street-name text { font: 400 29px "Noto Sans", sans-serif; fill: #807a70; paint-order: stroke; stroke: #f9f4e6; stroke-width: 3px; }
.district text { font: 700 25.500px "Noto Sans", sans-serif; fill: #6e353b; paint-order: stroke; stroke: #f9f6f2; stroke-width: 4px; stroke-linejoin: round; }
.city text { font-family: "Noto Sans", sans-serif; fill: #35383a; paint-order: stroke; stroke: #f9f6f2; stroke-width: 4px; }
.city-main { font-size: 49px; }
.city-sub { font-size: 39px; }

/* search */
.search-area { position: relative; padding: 38px 51px 0 51px; }
.search { height: 153px; padding: 0 22px 0 23px; background: #fff; border: 2px solid #d3d3d3; border-radius: 27px; }
.search-field { height: 131px; border-bottom: 5px solid #e51e63; display: flex; justify-content: space-between; padding: 0 4px 0 0; }
.query { font-size: 51px; line-height: 60px; color: #212121; padding-top: 51px; }
.search-icon { margin-top: 38px; }
.chips { display: flex; gap: 13.500px; margin-top: 13px; }
.chip { height: 107px; padding: 0 48.700px 2px; border: 2px solid #d3d3d3; border-radius: 52px; background: #fff; font: 400 33px Roboto, sans-serif; color: #000; }

/* keyboard */
.keyboard { height: 911px; flex: none; background: #292e32; padding: 0 12px; }
.suggest { height: 127px; padding: 0 0 16px 13px; display: flex; align-items: center; color: #ced2d6; font-size: 45px; }
.expand { width: 77px; height: 77px; border-radius: 50%; background: #fff; display: flex; align-items: center; justify-content: center; }
.word { text-align: center; padding-top: 5px; }
.word-first { width: 275px; padding-right: 7px; }
.word-mid { width: 316px; }
.word-last { width: 281px; }
.divider { width: 2px; height: 63px; background: #3f4447; margin-top: 2px; }
.row { display: flex; gap: 14px; height: 136px; margin-bottom: 22px; }
.row b { width: 93px; flex: none; display: flex; align-items: center; justify-content: center; border-radius: 16px; background: #484c4f; color: #fff; font-weight: 400; font-size: 69px; box-shadow: 0 2px 1px #1d2124; }
.digits { height: 128px; margin-bottom: 20px; }
.digits b { padding-top: 6px; }
.digits .one { padding-left: 5px; }
.letters b { padding-bottom: 7px; }
.home { padding-left: 54px; }
.home .first { width: 92px; }
.row .wide { width: 146px; padding: 0; }
.row .dark { background: #373b3f; }
.bottom { height: 142px; margin: 0; }
.row .sym { font-size: 46px; font-weight: 500; color: #c4c7ca; padding-top: 4px; }
.row .comma { flex-direction: column; justify-content: flex-start; padding-top: 29px; font-size: 52px; }
.comma span { line-height: 60px; margin-top: 6px; }
.row .space { width: 521px; font-size: 32px; letter-spacing: .35px; }
.row .period { align-items: flex-end; font-size: 52px; padding-bottom: 17px; }
.row .enter { background: #5e97f6; }

/* system navigation */
.navbar { height: 122px; flex: none; display: flex; align-items: center; padding-left: 219px; }
.navbar svg:nth-child(1) { margin-top: -7px; }
.navbar svg:nth-child(2) { margin-left: 243px; }
.navbar svg:nth-child(3) { margin-left: 244px; }
.navbar svg:nth-child(4) { margin-left: 110px; }
```
